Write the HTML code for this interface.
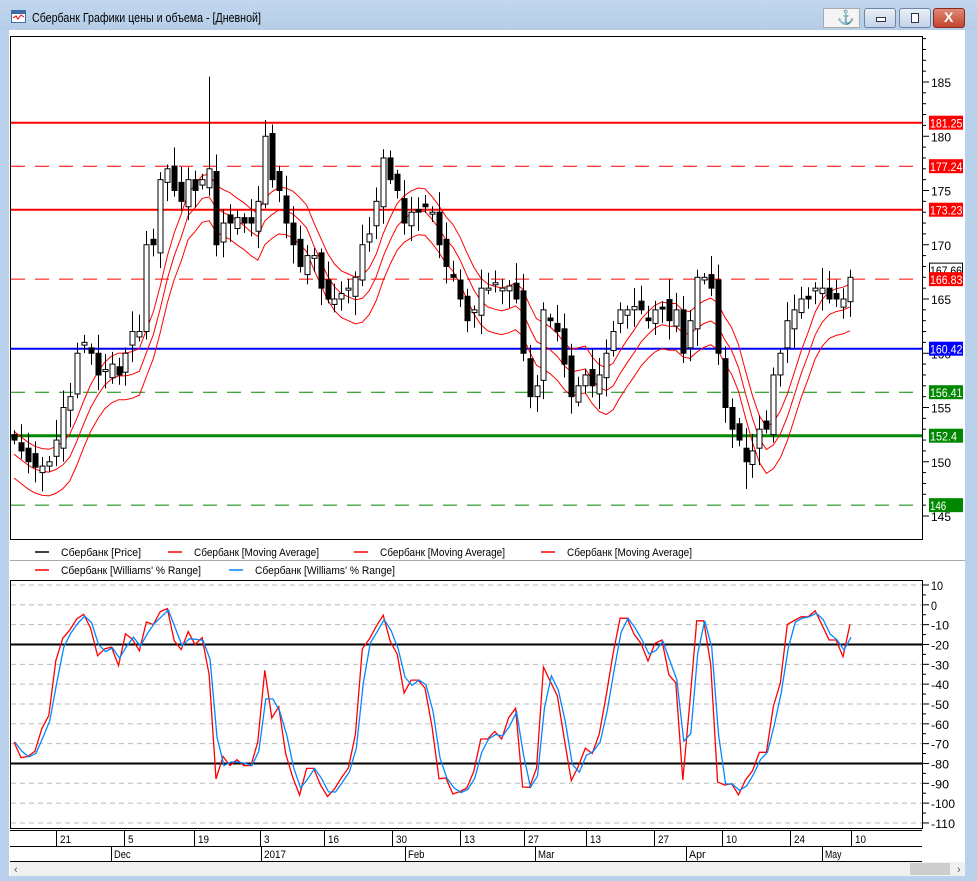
<!DOCTYPE html>
<html><head><meta charset="utf-8">
<style>
html,body{margin:0;padding:0;}
body{width:977px;height:881px;overflow:hidden;background:#b9d1ea;font-family:"Liberation Sans",sans-serif;position:relative;}
#title{position:absolute;left:0;top:0;width:977px;height:30px;background:linear-gradient(#c2d7ee,#b5cde8);}
#title .t{position:absolute;left:32px;top:10px;font-size:13px;color:#000;transform:scaleX(0.82);transform-origin:left;white-space:nowrap;}
#client{position:absolute;left:9px;top:30px;width:956px;height:846px;background:#fff;}
.btn{position:absolute;top:8px;height:18px;border:1px solid #6d84a3;border-radius:3px;background:linear-gradient(#e9f0f8,#c3d4e8);}
svg text{font-family:"Liberation Sans",sans-serif;}
</style></head><body>
<div id="title">
<svg style="position:absolute;left:11px;top:10px" width="16" height="14"><rect x="0.5" y="0.5" width="14" height="12" fill="#fff" stroke="#3a6ea5"/><rect x="1" y="1" width="13" height="3" fill="#3a6ea5"/><polyline points="2,8 5,6 7,9 10,5 13,7" fill="none" stroke="#d00" stroke-width="1"/></svg>
<div class="t">Сбербанк Графики цены и объема - [Дневной]</div>
<div class="btn" style="left:823px;width:35px;background:#f4f4f4;border-color:#aaa;border-radius:0"><div style="position:absolute;left:13px;top:0;font-size:14px;font-weight:bold">⚓</div></div>
<div class="btn" style="left:864px;width:30px"><div style="position:absolute;left:11px;top:8px;width:8px;height:3px;border:1px solid #334;background:#fff"></div></div>
<div class="btn" style="left:899px;width:30px"><div style="position:absolute;left:11px;top:4px;width:6px;height:8px;border:1px solid #334;background:#fff"></div></div>
<div class="btn" style="left:933px;width:30px;background:linear-gradient(#e08a78,#c2432c);border-color:#8a2a1c"><div style="position:absolute;left:10px;top:0px;color:#fff;font-weight:bold;font-size:14px">X</div></div>
</div>
<div id="client"></div>
<svg id="c" style="position:absolute;left:0;top:0" width="977" height="881"></svg>
<script>
var svg=document.getElementById('c');
var out=[];
function add(s){out.push(s);}
function T(x,y,s,txt,fill,w){return '<text x="'+x+'" y="'+y+'" font-size="'+s+'" fill="'+(fill||'#000')+'" textLength="'+(w||txt.length*s*0.46)+'" lengthAdjust="spacingAndGlyphs">'+txt+'</text>';}
function py(p){return 82+(185-p)*10.85;}
function wy(v){return 585+(10-v)*1.983;}
var closes=[152,151,150,149.5,149.6,150,152,155,156,160,161,160,158,158.5,159,158,160,162,162,170,170,176,177,175,174,176,175,176,177,170,172,172,172.5,172,172,174,180,176,175,172,170,168,169,169,166,165,165,165.5,166,167,170,171,174,178,176,175,172,173,173,173.5,173,170,168,167,165,163,164,166,166,166.5,166,166.2,165,160,156,157,164,163,162,159,156,157,158,157,158,160,162,164,164,164.3,164,163,164,164.2,163,164,160,163,167,167,166,160,155,153,152,150,151,153,153,158,160,163,164,165,165,166,166,165,165,165,167];
var n=closes.length,x0=14,dx=(850-14)/(n-1);
var H=[],L=[],O=[];
for(var i=0;i<n;i++){var o=i?closes[i-1]+((i*37%7)-3)*0.25:152.5;O.push(o);var r=((i*53)%11)/11;
H.push(Math.max(o,closes[i])+0.4+r*1.6);L.push(Math.min(o,closes[i])-0.4-((i*29)%9)/9*1.5);}
H[28]=185.5;H[36]=181.5;H[53]=178.8;L[105]=147.5;
add('<rect x="10.5" y="36.5" width="912" height="503" fill="#fff" stroke="#000"/>');
function hl(p,col,w,dash){add('<line x1="11" x2="922" y1="'+py(p)+'" y2="'+py(p)+'" stroke="'+col+'" stroke-width="'+w+'"'+(dash?' stroke-dasharray="14,10"':'')+'/>');}
hl(181.25,'#f00',2);hl(177.24,'#f00',1,1);hl(173.23,'#f00',2);hl(166.83,'#f00',1,1);hl(160.42,'#00f',2);hl(156.41,'#080',1,1);hl(152.4,'#080',3);hl(146,'#080',1,1);
var ma=[];for(var i=0;i<n;i++){var s=0,c=0;for(var j=Math.max(0,i-6);j<=i;j++){s+=closes[j];c++;}ma.push(s/c);}
[0.8,-1.3,-3.5].forEach(function(off){var pts=[];for(var i=0;i<n;i++)pts.push((x0+i*dx).toFixed(1)+','+py(ma[i]+off).toFixed(1));add('<polyline points="'+pts.join(' ')+'" fill="none" stroke="#f00" stroke-width="1"/>');});
for(var i=0;i<n;i++){var x=Math.round(x0+i*dx)+0.5,o=O[i],c=closes[i];
add('<line x1="'+x+'" x2="'+x+'" y1="'+py(H[i])+'" y2="'+py(L[i])+'" stroke="#000"/>');
var t=py(Math.max(o,c)),b=py(Math.min(o,c));if(b-t<2)b=t+2;
add('<rect x="'+(x-2.5)+'" y="'+t+'" width="5" height="'+(b-t)+'" fill="'+(c<o?'#000':'#fff')+'" stroke="#000"/>');}
for(var p=145;p<=190;p++){var y=py(p);if(y<37||y>539)continue;add('<line x1="922" x2="'+(p%5?926:929)+'" y1="'+y+'" y2="'+y+'" stroke="#000"/>');if(p%5==0)add(T(931,y+5,12,''+p,'#000',20));}
function lab(p,txt,bg){var y=py(p);add('<rect x="929" y="'+(y-7)+'" width="34" height="14" fill="'+bg+'"/>'+T(930,y+5,12,txt,'#fff',txt.length*5.4));}
add('<rect x="929.5" y="'+(py(167.66)-7)+'" width="33" height="13" fill="#fff" stroke="#000"/>'+T(930,py(167.66)+5,12,'167.66','#000',32));
lab(181.25,'181.25','#f00');lab(177.24,'177.24','#f00');lab(173.23,'173.23','#f00');lab(166.83,'166.83','#f00');lab(160.42,'160.42','#00f');lab(156.41,'156.41','#080');lab(152.4,'152.4','#080');lab(146,'146','#080');
add('<line x1="10" x2="965" y1="560.5" y2="560.5" stroke="#aaa"/>');
function leg(x,y,col,txt){add('<line x1="'+x+'" x2="'+(x+14)+'" y1="'+y+'" y2="'+y+'" stroke="'+col+'" stroke-width="1.5"/>'+T(x+26,y+4,11,txt,'#000',txt.length*5.0));}
leg(35,552,'#000','Сбербанк [Price]');leg(168,552,'#f00','Сбербанк [Moving Average]');leg(354,552,'#f00','Сбербанк [Moving Average]');leg(541,552,'#f00','Сбербанк [Moving Average]');
leg(35,570,'#f00',"Сбербанк [Williams' % Range]");leg(229,570,'#08f',"Сбербанк [Williams' % Range]");
add('<rect x="10.5" y="580.5" width="912" height="248" fill="#fff" stroke="#000"/>');
for(var v=10;v>=-110;v-=10){var y=wy(v);add('<line x1="11" x2="922" y1="'+y+'" y2="'+y+'" stroke="#bbb" stroke-dasharray="5,4"/><line x1="922" x2="929" y1="'+y+'" y2="'+y+'" stroke="#000"/>'+T(931,y+5,12,''+v,'#000',(''+v).length*6));if(v>-110){var y2=wy(v-5);add('<line x1="922" x2="926" y1="'+y2+'" y2="'+y2+'" stroke="#000"/>');}}
add('<line x1="11" x2="922" y1="'+wy(-20)+'" y2="'+wy(-20)+'" stroke="#000" stroke-width="2"/><line x1="11" x2="922" y1="'+wy(-80)+'" y2="'+wy(-80)+'" stroke="#000" stroke-width="2"/>');
var wr=[];for(var i=0;i<n;i++){var hh=-1e9,ll=1e9;for(var j=Math.max(0,i-9);j<=i;j++){hh=Math.max(hh,H[j]);ll=Math.min(ll,L[j]);}wr.push(-100*(hh-closes[i])/(hh-ll||1));}
var wb=[];for(var i=0;i<n;i++)wb.push(i?(wr[i]*0.6+wr[i-1]*0.4):wr[i]);
function pl(arr,col,sh){var pts=[];for(var i=0;i<n;i++)pts.push((x0+i*dx+sh).toFixed(1)+','+wy(arr[i]).toFixed(1));add('<polyline points="'+pts.join(' ')+'" fill="none" stroke="'+col+'" stroke-width="1.3"/>');}
pl(wr,'#f00',0);pl(wb,'#08f',1);
add('<line x1="10" x2="922" y1="830.5" y2="830.5" stroke="#000"/><line x1="10" x2="922" y1="846.5" y2="846.5" stroke="#000"/><line x1="10" x2="922" y1="861.5" y2="861.5" stroke="#000"/>');
var tk=[[56,'21'],[124,'5'],[194,'19'],[260,'3'],[324,'16'],[392,'30'],[460,'13'],[524,'27'],[586,'13'],[654,'27'],[722,'10'],[790,'24'],[851,'10']];
tk.forEach(function(t){add('<line x1="'+(t[0]+.5)+'" x2="'+(t[0]+.5)+'" y1="831" y2="846" stroke="#000"/>'+T(t[0]+4,843,11,t[1],'#000',t[1].length*5.5));});
var mo=[[111,'Dec'],[261,'2017'],[405,'Feb'],[535,'Mar'],[686,'Apr'],[822,'May']];
mo.forEach(function(t){add('<line x1="'+(t[0]+.5)+'" x2="'+(t[0]+.5)+'" y1="847" y2="861" stroke="#000"/>'+T(t[0]+3,858,11,t[1],'#000',t[1].length*5.5));});
add('<rect x="10" y="862" width="955" height="14" fill="#f0f0f0"/><rect x="910" y="863" width="40" height="12" fill="#cdcdcd"/><text x="14" y="873" font-size="11" fill="#555">‹</text><text x="957" y="873" font-size="11" fill="#555">›</text>');
svg.innerHTML=out.join('');
</script>
</body></html>
